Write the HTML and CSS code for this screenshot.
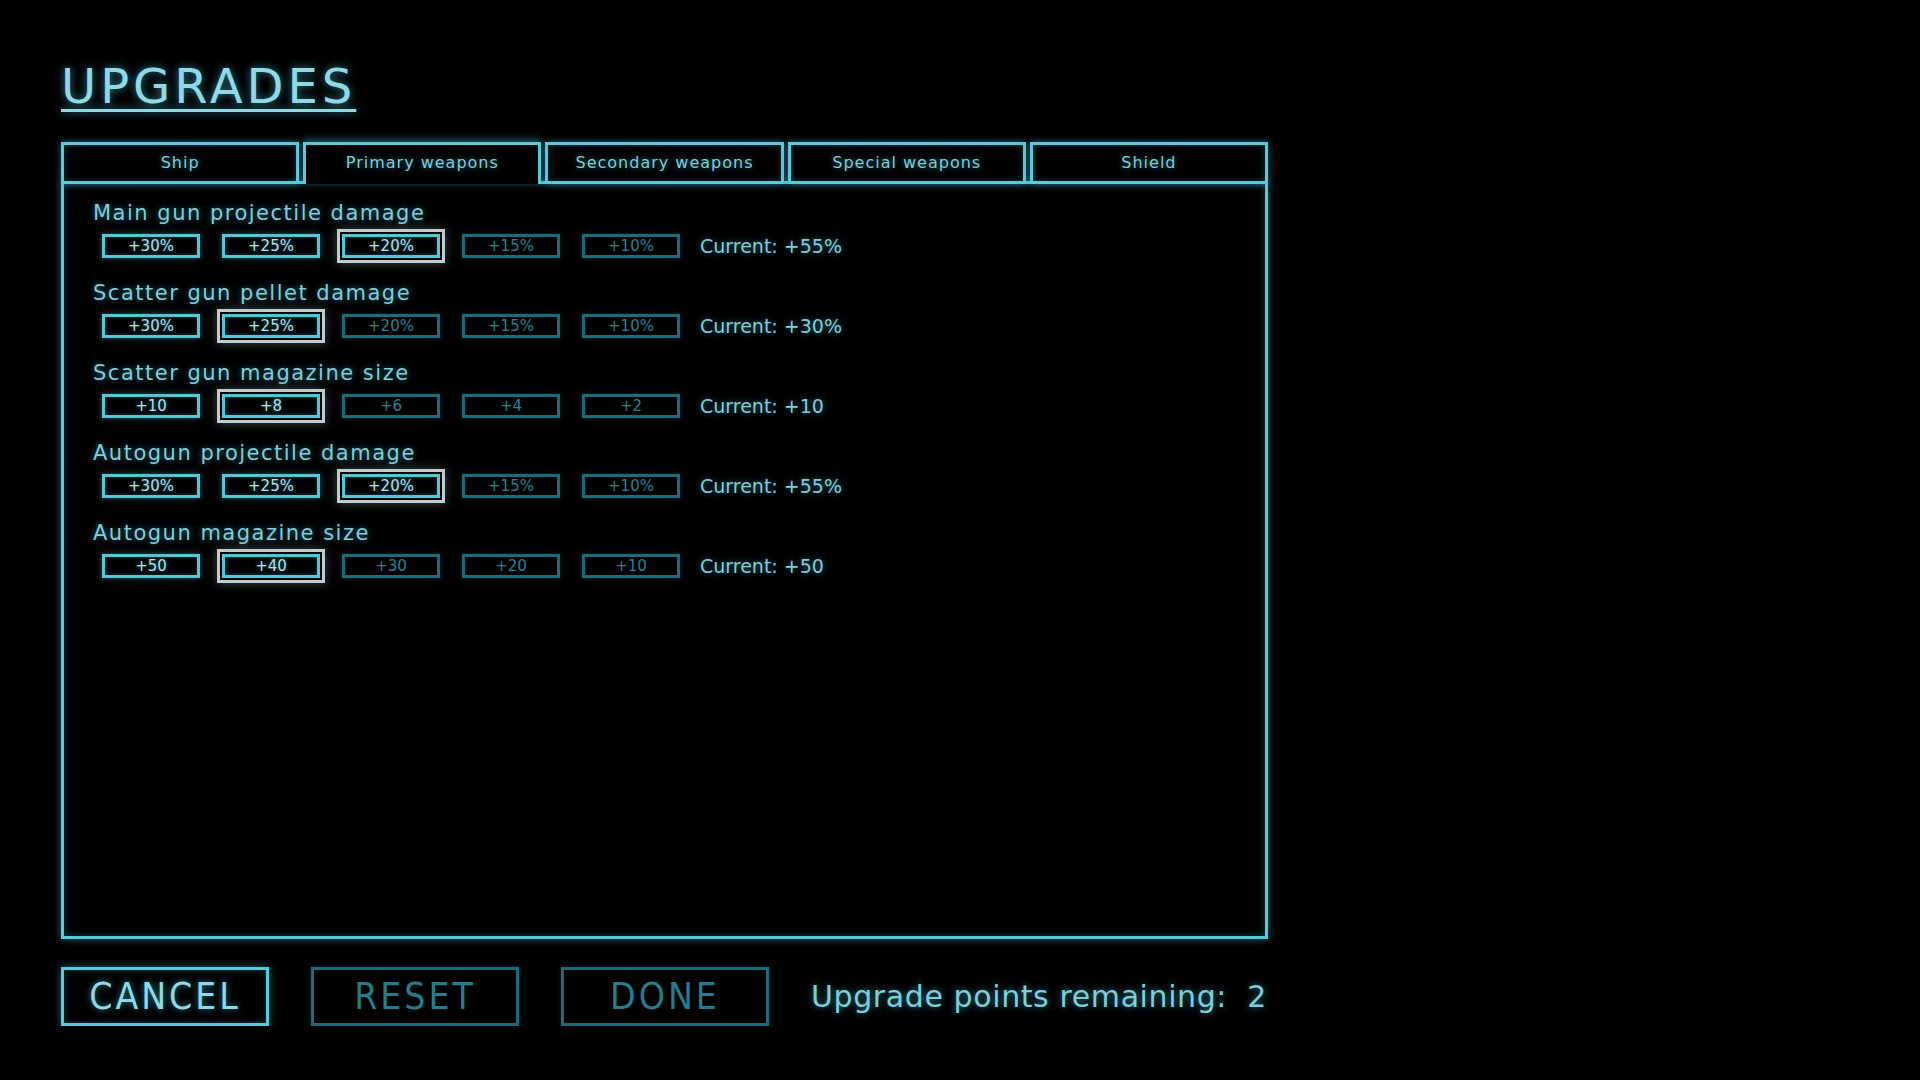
FILE: index.html
```html
<!DOCTYPE html>
<html lang="en">
<head>
    <meta charset="UTF-8">
    <meta name="viewport" content="width=device-width, initial-scale=1.0">
    <title>Upgrades</title>
    <link rel="stylesheet" href="styles.css">
</head>
<body>
    <div class="screen">
        <h1 class="title">UPGRADES</h1>

        <div class="tabs">
            <div class="tab">Ship</div>
            <div class="tab active">Primary weapons</div>
            <div class="tab">Secondary weapons</div>
            <div class="tab">Special weapons</div>
            <div class="tab">Shield</div>
        </div>

        <div class="panel">
            <div class="upgrade">
                <div class="upgrade-name">Main gun projectile damage</div>
                <div class="options">
                    <div class="opt">+30%</div>
                    <div class="opt">+25%</div>
                    <div class="opt picked">+20%</div>
                    <div class="opt locked">+15%</div>
                    <div class="opt locked">+10%</div>
                    <div class="current">Current: +55%</div>
                </div>
            </div>

            <div class="upgrade">
                <div class="upgrade-name">Scatter gun pellet damage</div>
                <div class="options">
                    <div class="opt">+30%</div>
                    <div class="opt picked">+25%</div>
                    <div class="opt locked">+20%</div>
                    <div class="opt locked">+15%</div>
                    <div class="opt locked">+10%</div>
                    <div class="current">Current: +30%</div>
                </div>
            </div>

            <div class="upgrade">
                <div class="upgrade-name">Scatter gun magazine size</div>
                <div class="options">
                    <div class="opt">+10</div>
                    <div class="opt picked">+8</div>
                    <div class="opt locked">+6</div>
                    <div class="opt locked">+4</div>
                    <div class="opt locked">+2</div>
                    <div class="current">Current: +10</div>
                </div>
            </div>

            <div class="upgrade">
                <div class="upgrade-name">Autogun projectile damage</div>
                <div class="options">
                    <div class="opt">+30%</div>
                    <div class="opt">+25%</div>
                    <div class="opt picked">+20%</div>
                    <div class="opt locked">+15%</div>
                    <div class="opt locked">+10%</div>
                    <div class="current">Current: +55%</div>
                </div>
            </div>

            <div class="upgrade">
                <div class="upgrade-name">Autogun magazine size</div>
                <div class="options">
                    <div class="opt">+50</div>
                    <div class="opt picked">+40</div>
                    <div class="opt locked">+30</div>
                    <div class="opt locked">+20</div>
                    <div class="opt locked">+10</div>
                    <div class="current">Current: +50</div>
                </div>
            </div>
        </div>

        <div class="actions">
            <div class="action">CANCEL</div>
            <div class="action off">RESET</div>
            <div class="action off">DONE</div>
            <div class="points">Upgrade points remaining:&nbsp; 2</div>
        </div>
    </div>
</body>
</html>
```

FILE: styles.css
```css
body {
    margin: 0;
    padding: 0;
    background-color: #000;
    color: #80cdda;
    font-family: 'DejaVu Sans', sans-serif;
    overflow: hidden;
}

.screen {
    width: 1207px;
    padding: 58px 0 0 61px;
}

.title {
    margin: 0;
    font-size: 48px;
    font-weight: normal;
    line-height: 56px;
    letter-spacing: 4px;
    color: #8fd8e4;
    text-decoration: underline;
    text-decoration-thickness: 3px;
    text-underline-offset: 6px;
    text-shadow: 0 0 8px rgba(70, 190, 220, 0.7);
}

/* tab strip sits on top of the panel border */
.tabs {
    display: flex;
    gap: 4px;
    margin-top: 28px;
    margin-bottom: -3px;
    position: relative;
    z-index: 1;
}

.tab {
    flex: 1;
    height: 42px;
    box-sizing: border-box;
    border: 3px solid #5cc8da;
    background-color: #000;
    text-align: center;
    line-height: 36px;
    font-size: 16px;
    letter-spacing: 1px;
    color: #80cdda;
    text-shadow: 0 0 6px rgba(70, 190, 220, 0.6);
    box-shadow: 0 0 7px rgba(60, 180, 210, 0.55), inset 0 0 6px rgba(60, 180, 210, 0.35);
}

.tab.active {
    border-bottom-width: 0;
    padding-bottom: 3px;
    box-shadow: 0 -3px 7px rgba(60, 180, 210, 0.45);
}

.panel {
    height: 758px;
    box-sizing: border-box;
    border: 3px solid #5cc8da;
    padding: 15px 0 0 29px;
    box-shadow: 0 0 8px rgba(60, 180, 210, 0.55), inset 0 0 7px rgba(60, 180, 210, 0.35);
}

.upgrade {
    margin-bottom: 21px;
}

.upgrade-name {
    font-size: 21px;
    line-height: 28px;
    letter-spacing: 1.5px;
    color: #80cdda;
    text-shadow: 0 0 6px rgba(70, 190, 220, 0.6);
}

.options {
    display: flex;
    align-items: center;
    gap: 22px;
    margin-top: 7px;
    margin-left: 9px;
}

.opt {
    width: 98px;
    height: 24px;
    box-sizing: border-box;
    border: 3px solid #58c4d6;
    text-align: center;
    font-size: 15px;
    line-height: 18px;
    color: #b0e3ec;
    text-shadow: 0 0 5px rgba(70, 190, 220, 0.6);
    box-shadow: 0 0 6px rgba(60, 180, 210, 0.5), inset 0 0 4px rgba(60, 180, 210, 0.3);
}

.opt.locked {
    border-color: #1d6b7a;
    color: #2a8191;
    text-shadow: none;
    box-shadow: 0 0 4px rgba(30, 110, 130, 0.4);
}

.opt.picked {
    box-shadow:
        inset 0 0 4px rgba(60, 180, 210, 0.4),
        0 0 0 2px #000,
        0 0 0 5px #c0cdd0,
        0 0 10px 5px rgba(200, 230, 235, 0.3);
}

.current {
    font-size: 19px;
    margin-left: -2px;
    color: #80cdda;
    text-shadow: 0 0 6px rgba(70, 190, 220, 0.6);
}

.actions {
    display: flex;
    align-items: center;
    gap: 42px;
    margin-top: 28px;
}

.action {
    width: 208px;
    height: 59px;
    box-sizing: border-box;
    border: 3px solid #5cc8da;
    text-align: center;
    font-family: 'DejaVu Sans Condensed', 'DejaVu Sans', sans-serif;
    font-stretch: condensed;
    font-size: 37px;
    line-height: 53px;
    letter-spacing: 3px;
    color: #8fd8e4;
    text-shadow: 0 0 7px rgba(70, 190, 220, 0.65);
    box-shadow: 0 0 8px rgba(60, 180, 210, 0.55), inset 0 0 6px rgba(60, 180, 210, 0.35);
}

.action.off {
    border-color: #1d6b7a;
    color: #237d8e;
    text-shadow: none;
    box-shadow: 0 0 5px rgba(30, 110, 130, 0.4);
}

.points {
    font-size: 30px;
    letter-spacing: 0.6px;
    color: #80cdda;
    text-shadow: 0 0 7px rgba(70, 190, 220, 0.65);
}
```
